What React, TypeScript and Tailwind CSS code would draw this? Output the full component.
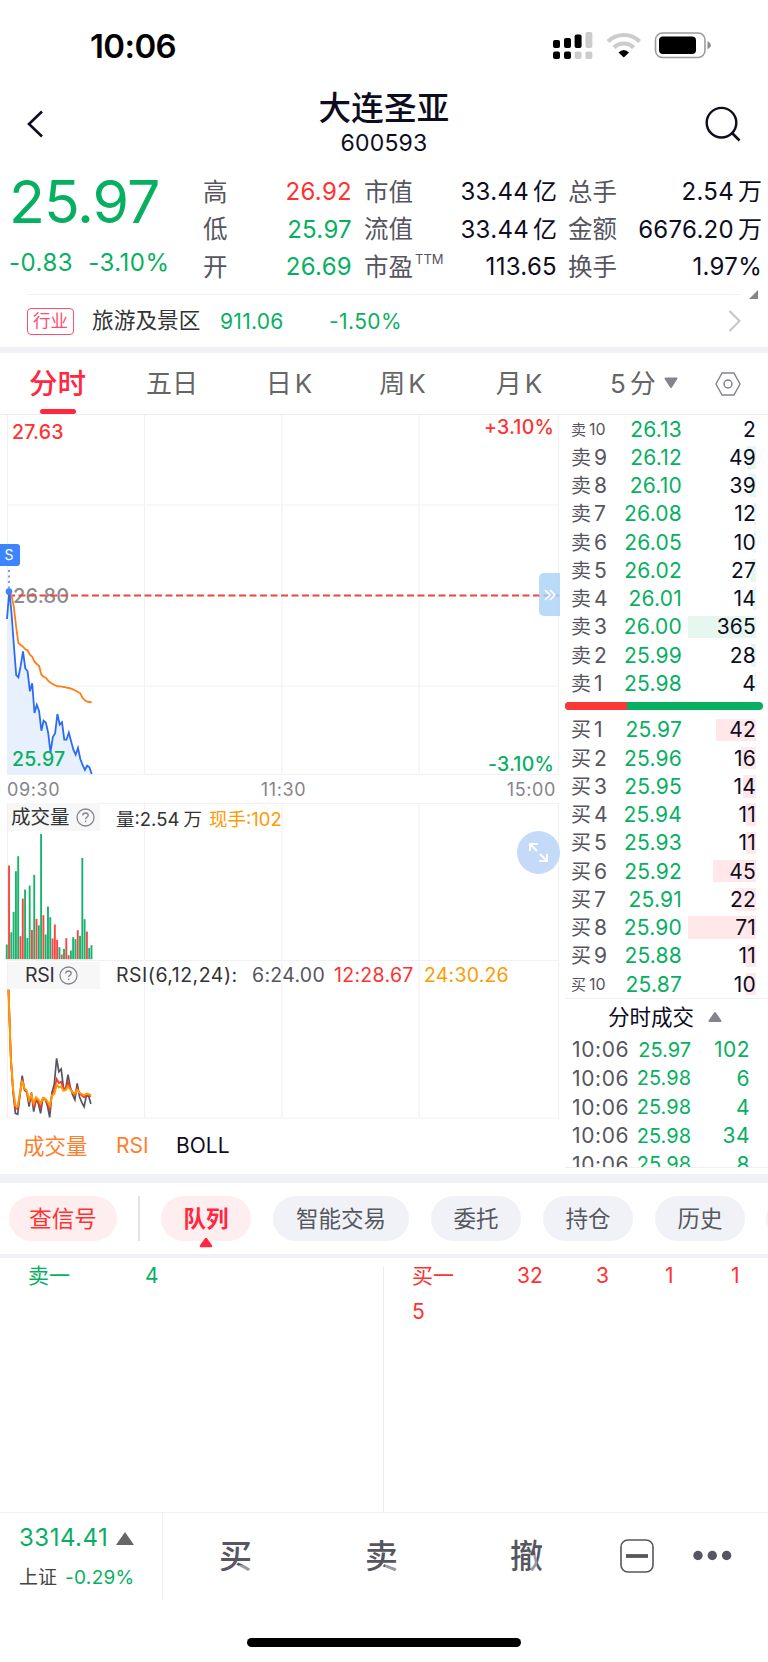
import { clsx } from "clsx";

type Level = { label: string; price: string; size: number; bar: number };

const asks: Level[] = [
  { label: "10", price: "26.13", size: 2, bar: 0 },
  { label: "9", price: "26.12", size: 49, bar: 9 },
  { label: "8", price: "26.10", size: 39, bar: 7 },
  { label: "7", price: "26.08", size: 12, bar: 2 },
  { label: "6", price: "26.05", size: 10, bar: 2 },
  { label: "5", price: "26.02", size: 27, bar: 5 },
  { label: "4", price: "26.01", size: 14, bar: 3 },
  { label: "3", price: "26.00", size: 365, bar: 68 },
  { label: "2", price: "25.99", size: 28, bar: 5 },
  { label: "1", price: "25.98", size: 4, bar: 1 },
];

const bids: Level[] = [
  { label: "1", price: "25.97", size: 42, bar: 40 },
  { label: "2", price: "25.96", size: 16, bar: 15 },
  { label: "3", price: "25.95", size: 14, bar: 13 },
  { label: "4", price: "25.94", size: 11, bar: 10 },
  { label: "5", price: "25.93", size: 11, bar: 10 },
  { label: "6", price: "25.92", size: 45, bar: 43 },
  { label: "7", price: "25.91", size: 22, bar: 21 },
  { label: "8", price: "25.90", size: 71, bar: 68 },
  { label: "9", price: "25.88", size: 11, bar: 10 },
  { label: "10", price: "25.87", size: 10, bar: 10 },
];

const trades = [
  { price: "25.97", size: "102" },
  { price: "25.98", size: "6" },
  { price: "25.98", size: "4" },
  { price: "25.98", size: "34" },
  { price: "25.98", size: "8" },
];

// one value per minute since 09:30, in thirds of a pixel from the chart top
const priceLine = [
  612, 527, 597, 692, 780, 787, 752, 709, 760, 769, 829, 805, 894, 869, 889, 947, 917, 923, 954,
  1012, 967, 955, 897, 929, 922, 974, 974, 953, 979, 1004, 1019, 999, 1032, 1050, 1065, 1052, 1057,
  1077,
];
const averageLine = [
  536, 536, 542, 577, 637, 684, 690, 695, 703, 706, 719, 725, 740, 747, 753, 779, 785, 789, 797,
  803, 807, 811, 814, 814, 815, 816, 818, 819, 821, 824, 827, 831, 835, 849, 856, 860, 861, 862,
];
const volumes = [
  44, -281, 81, 142, 264, 309, -69, -182, 209, 64, 221, -88, 253, -121, 102, 376, -132, 74, 158,
  126, -62, -104, -58, 36, -14, 31, -63, -12, 26, 66, 60, -87, 70, 304, 120, -83, 34, 42,
];
const rsi6 = [
  597, 800, 905, 968, 971, 915, 855, 898, 905, 948, 905, 963, 928, 938, 968, 922, 925, 945, 980,
  905, 880, 803, 843, 835, 892, 893, 852, 890, 912, 927, 878, 918, 935, 948, 915, 917, 940,
];
const rsi12 = [
  597, 800, 900, 953, 955, 910, 865, 895, 902, 935, 912, 950, 925, 932, 950, 922, 924, 938, 955,
  910, 900, 865, 877, 873, 896, 896, 875, 893, 905, 912, 893, 908, 915, 920, 912, 912, 918,
];
const rsi24 = [
  597, 800, 895, 945, 947, 908, 870, 893, 900, 928, 912, 938, 920, 926, 938, 922, 924, 932, 945,
  915, 910, 883, 890, 888, 900, 898, 887, 897, 905, 908, 898, 906, 910, 914, 909, 910, 914,
];

const STEP = 2.29;

function points(values: number[], x0: number, base = 0) {
  return values
    .map((v, i) => `${(x0 + i * STEP).toFixed(1)},${((v - base) / 3).toFixed(1)}`)
    .join(" ");
}

function StatusBar() {
  return (
    <div className="flex h-[92px] items-center pl-[90px]">
      <span className="w-[460px] text-[33px] leading-none font-semibold tracking-[-0.600px] text-black">
        10:06
      </span>
      <svg className="mr-[10px]" width="46" height="32" viewBox="550 30 46 32">
        <g fill="#000">
          <rect x="553" y="40" width="7" height="8" rx="2" />
          <rect x="564" y="38" width="7" height="10" rx="2" />
          <rect x="574.6" y="34.5" width="7" height="13.5" rx="2" />
          <rect x="553" y="51.6" width="7" height="7.4" rx="2" />
          <rect x="564" y="51.6" width="7" height="7.4" rx="2" />
        </g>
        <g fill="#ccc">
          <rect x="585.4" y="32" width="7" height="16" rx="2" />
          <rect x="574.6" y="51.6" width="7" height="7.4" rx="2" />
          <rect x="585.4" y="51.6" width="7" height="7.4" rx="2" />
        </g>
      </svg>
      <svg className="mr-[12px]" width="36" height="32" viewBox="605 30 36 32">
        <path d="M607 41.5 A22.5 22.5 0 0 1 638.6 41.5" stroke="#ccc" strokeWidth="4.2" fill="none" />
        <path d="M613 47.5 A14 14 0 0 1 632.6 47.5" stroke="#ccc" strokeWidth="4.2" fill="none" />
        <path d="M622.8 57.5 L617.5 52.5 Q622.8 47.5 628 52.5 Z" fill="#000" />
      </svg>
      <svg width="60" height="32" viewBox="653 30 60 32">
        <rect x="654.5" y="33" width="49.5" height="24.5" rx="7" stroke="#9b9b9b" strokeWidth="1.6" fill="none" />
        <rect x="658" y="36.5" width="37" height="17.5" rx="4" fill="#000" />
        <path d="M706.5 41 Q710 43 710 45.3 Q710 47.6 706.5 49.5 Z" fill="#8c8c8c" />
      </svg>
    </div>
  );
}

function Header() {
  return (
    <header className="flex h-[80px] justify-between text-[#0e0d1e]">
      <svg width="70" height="64" viewBox="0 92 70 64">
        <path d="M42 111.5 L29 124 L42 136.5" fill="none" stroke="currentColor" strokeWidth="2.6" />
      </svg>
      <div className="flex flex-col items-center">
        <h1 className="mt-[1px] h-[34px] text-[32.500px] leading-[32px] font-medium tracking-[0.300px]">大连圣亚</h1>
        <p className="text-[23px] leading-[32px] tracking-[0.200px]">600593</p>
      </div>
      <svg width="70" height="64" viewBox="698 92 70 64">
        <circle cx="721.5" cy="122.7" r="14.8" fill="none" stroke="currentColor" strokeWidth="2.4" />
        <path d="M732 133 L739.5 140.5" stroke="currentColor" strokeWidth="2.6" />
      </svg>
    </header>
  );
}

function Stat({ label, value, unit, sup, className }: {
  label: string;
  value: string;
  unit?: string;
  sup?: string;
  className?: string;
}) {
  return (
    <div className="flex h-[37.700px] items-center justify-between">
      <span className="flex text-[24.500px] text-[#565560]">
        {label}
        {sup && <sup className="top-[-8px] ml-[2px] text-[13px] leading-[24px]">{sup}</sup>}
      </span>
      <span className={clsx("flex text-[24px] tracking-[0.300px]", className ?? "text-[#0e0d1e]")}>
        {value}
        {unit && <span className="ml-[4px] tracking-normal">{unit}</span>}
      </span>
    </div>
  );
}

function Quote() {
  return (
    <section className="flex h-[122px] pt-px pl-[9px] leading-none">
      <div className="w-[194px] text-[#07b061]">
        <div className="h-[75px] pt-[1px] text-[59px] leading-[56px] tracking-[-1.100px]">25.97</div>
        <div className="flex gap-[15px] text-[24px] leading-[30px] tracking-[0.500px]">
          <span>-0.83</span>
          <span>-3.10%</span>
        </div>
      </div>
      <div className="mr-[12px] w-[149px]">
        <Stat label="高" value="26.92" className="text-[#ff3232]" />
        <Stat label="低" value="25.97" className="text-[#07b061]" />
        <Stat label="开" value="26.69" className="text-[#07b061]" />
      </div>
      <div className="mr-[11px] w-[193px]">
        <Stat label="市值" value="33.44" unit="亿" />
        <Stat label="流值" value="33.44" unit="亿" />
        <Stat label="市盈" sup="TTM" value="113.65" />
      </div>
      <div className="w-[194px]">
        <Stat label="总手" value="2.54" unit="万" />
        <Stat label="金额" value="6676.20" unit="万" />
        <Stat label="换手" value="1.97%" />
        <svg className="mt-[4px] ml-[181px] -mb-[4px]" width="9" height="9" viewBox="0 0 9 9">
          <path d="M9 0 V9 H0 Z" fill="#85848d" />
        </svg>
      </div>
    </section>
  );
}

function Industry() {
  return (
    <section className="mx-[27px] flex h-[53px] items-center border-t border-[#f0f0f2] text-[21px] leading-none">
      <span className="flex h-[27px] w-[47px] items-center justify-center rounded-[4px] border-[1.500px] border-[#ff4d6f] text-[17.500px] text-[#ff4d6f]">
        行业
      </span>
      <span className="ml-[18px] w-[128px] text-[21.700px] text-[#333]">旅游及景区</span>
      <span className="w-[109px] tracking-[0.300px] text-[#07b061]">911.06</span>
      <span className="tracking-[0.400px] text-[#07b061]">-1.50%</span>
      <svg className="ml-auto" width="13" height="22" viewBox="0 0 13 22">
        <path d="M1.5 1 L11.5 11 L1.5 21" fill="none" stroke="#c4c4c8" strokeWidth="2" />
      </svg>
    </section>
  );
}

function Tabs() {
  return (
    <nav className="flex h-[62px] border-b border-[#ededf0] text-[26px] leading-[62px] text-[#666]">
      <div className="flex w-[115px] flex-col items-center text-[28.500px] font-medium text-[#ff2741]">
        <span className="h-[56px]">分时</span>
        <span className="h-[6px] w-[36px] rounded-full bg-[#ff2741]" />
      </div>
      <span className="w-[114px] text-center">五日</span>
      <span className="flex w-[120px] justify-center gap-[3px]">日<span>K</span></span>
      <span className="flex w-[107px] justify-center gap-[3px]">周<span>K</span></span>
      <span className="flex w-[126px] justify-center gap-[3px]">月<span>K</span></span>
      <span className="ml-[28px] flex w-[54px] gap-[4px]">5<span>分</span></span>
      <svg className="mt-[24px]" width="14" height="12" viewBox="0 0 14 12">
        <path d="M1.5 1.5 H12.5 L7 10 Z" fill="#85848d" stroke="#85848d" strokeWidth="2" strokeLinejoin="round" />
      </svg>
      <svg className="mt-[18px] ml-[36px]" width="28" height="26" viewBox="0 0 28 26">
        <path d="M8 2 H20 L26 13 L20 24 H8 L2 13 Z" fill="none" stroke="#85848d" strokeWidth="1.5" strokeLinejoin="round" />
        <circle cx="14" cy="13" r="4" fill="none" stroke="#85848d" strokeWidth="1.5" />
      </svg>
    </nav>
  );
}

function Grid({ height, lines = [] }: { height: number; lines?: number[] }) {
  return (
    <g stroke="#f1f1f3" strokeWidth="1.2">
      {[7.5, 144.5, 282, 419, 558.5].map((x) => (
        <line key={x} x1={x} x2={x} y1="0" y2={height} />
      ))}
      {lines.map((y) => (
        <line key={y} x1="7" x2="559" y1={y} y2={y} />
      ))}
    </g>
  );
}

function PriceChart() {
  return (
    <div className="relative h-[361px] text-[19.500px] leading-none font-medium tracking-[0.200px]">
      <svg width="560" height="361" viewBox="0 0 560 361">
        <Grid height={360} lines={[90, 271, 359.5]} />
        <polygon points={`${points(priceLine, 7)} 92,360 7,360`} fill="#e8effd" />
        <text x="13" y="188" fontSize="20" fill="#8c8c8c">26.80</text>
        <line x1="8" x2="559" y1="180.5" y2="180.5" stroke="#ee4443" strokeWidth="2" strokeDasharray="7 3.5" />
        <polyline points={points(averageLine, 7)} fill="none" stroke="#ff7d1a" strokeWidth="1.8" />
        <polyline points={points(priceLine, 7)} fill="none" stroke="#2a6df5" strokeWidth="1.8" />
        <line x1="9" x2="9" y1="155" y2="174" stroke="#3d84ff" strokeWidth="1.5" strokeDasharray="2 3.5" />
        <circle cx="9" cy="176.5" r="3.3" fill="#3d84ff" />
      </svg>
      <span className="absolute top-[8px] left-[12px] text-[#ff3232]">27.63</span>
      <span className="absolute top-[3px] right-[6px] text-[#ff3232]">+3.10%</span>
      <span className="absolute top-[335px] left-[12px] text-[#07b061]">25.97</span>
      <span className="absolute top-[340px] right-[6px] text-[#07b061]">-3.10%</span>
      <span className="absolute top-[129px] left-0 flex h-[22px] w-[20px] items-center justify-center rounded-r-[3px] bg-[#3d84ff] pr-[2px] text-[14px] font-normal text-white">
        S
      </span>
      <span className="absolute top-[158px] right-0 flex h-[43px] w-[21px] items-center rounded-l-[5px] bg-[#a9d2f6]/80">
        <svg className="ml-[5px]" width="13" height="14" viewBox="0 0 13 14">
          <path d="M1 2 L6 7 L1 12 M6 2 L11 7 L6 12" fill="none" stroke="#fff" strokeWidth="1.5" />
        </svg>
      </span>
    </div>
  );
}

function Help() {
  return (
    <svg width="19" height="19" viewBox="0 0 19 19" fill="none" stroke="#85848d" strokeWidth="1.3">
      <circle cx="9.5" cy="9.5" r="8.5" />
      <path d="M6.8 7.5 Q6.8 5 9.5 5 Q12.2 5 12.2 7.3 Q12.2 8.6 10.8 9.3 Q9.6 9.9 9.6 11.2" />
      <path d="M9.6 12.6 V14.2" />
    </svg>
  );
}

function VolumeChart() {
  return (
    <div className="relative h-[159px] text-[19px] leading-[28px]">
      <svg width="560" height="159" viewBox="0 0 560 159">
        <Grid height={157} lines={[0.5, 157.5]} />
        {volumes.map((v, i) => (
          <rect
            key={i}
            x={5.8 + i * STEP}
            y={156.2 - Math.abs(v) / 3}
            width="1.9"
            height={Math.abs(v) / 3}
            fill={v < 0 ? "#fb4545" : "#19b36d"}
          />
        ))}
      </svg>
      <div className="absolute top-0 left-0 flex whitespace-nowrap text-[#333]">
        <span className="ml-[8px] flex h-[28px] w-[92px] items-center gap-[6px] bg-[#f7f7f8] pl-[3px] text-[19.500px]">
          成交量
          <Help />
        </span>
        <span className="ml-[16px] flex w-[93px] pt-[2px] text-[18.500px]">
          量:2.54<span className="ml-[4px]">万</span>
        </span>
        <span className="pt-[2px] text-[18.500px] text-[#ff9a00]">现手:102</span>
      </div>
      <span className="absolute top-[28px] right-0 flex h-[43px] w-[43px] items-center justify-center rounded-full bg-[#c5daf8]">
        <svg width="21" height="21" viewBox="0 0 21 21" fill="none" stroke="#fff" strokeWidth="2">
          <path d="M2 9 V2 H10 M2 2 L9 9" />
          <path d="M19 12 V19 H11 M19 19 L12 12" />
        </svg>
      </span>
    </div>
  );
}

function RsiChart() {
  return (
    <div className="relative h-[158px] text-[19.500px] leading-[27px]">
      <svg width="560" height="158" viewBox="0 0 560 158">
        <Grid height={156} lines={[156]} />
        <g fill="none" strokeWidth="1.7">
          <polyline points={points(rsi6, 8.5, 514)} stroke="#565560" />
          <polyline points={points(rsi12, 8.5, 514)} stroke="#ff3232" />
          <polyline points={points(rsi24, 8.5, 514)} stroke="#ff9a00" strokeWidth="2" />
        </g>
      </svg>
      <div className="absolute top-0 left-[8px] flex whitespace-nowrap text-[#333]">
        <span className="mr-[16px] flex w-[92px] items-center gap-[5px] bg-[#f7f7f8] pl-[17px] tracking-[-0.300px]">
          RSI
          <Help />
        </span>
        <span className="w-[136px] tracking-[0.500px]">RSI(6,12,24):</span>
        <span className="w-[82px] tracking-[0.300px] text-[#565560]">6:24.00</span>
        <span className="w-[90px] tracking-[0.300px] text-[#ff3232]">12:28.67</span>
        <span className="tracking-[0.200px] text-[#ff9a00]">24:30.26</span>
      </div>
    </div>
  );
}

function BookRow({ side, level }: { side: "卖" | "买"; level: Level }) {
  const small = level.label === "10";
  return (
    <div className="flex h-[28.270px] items-center pr-[12px] pl-[11px] text-[21px] leading-none">
      <span
        className={clsx(
          "flex w-[41px] items-baseline text-[#565560]",
          small ? "gap-[3px] text-[16px]" : "gap-[3px] text-[21px]",
        )}
      >
        <span className={small ? "text-[15px]" : "text-[20px]"}>{side}</span>
        {level.label}
      </span>
      <span className="w-[70px] text-right tracking-[0.200px] text-[#07b061]">{level.price}</span>
      <span className="relative flex h-[22.500px] flex-1 items-center justify-end text-[#0e0d1e]">
        <span
          className={clsx("absolute right-0 h-full", side === "卖" ? "bg-[#e6f7ef]" : "bg-[#ffe7ea]")}
          style={{ width: level.bar }}
        />
        <span className="relative tracking-[0.200px]">{level.size}</span>
      </span>
    </div>
  );
}

function OrderBook() {
  return (
    <aside className="flex w-[208px] flex-col">
      {asks.map((l) => (
        <BookRow key={l.label} side="卖" level={l} />
      ))}
      <div className="mt-[4px] mb-[6px] ml-[5px] flex h-[8px] w-[198px] shrink-0 overflow-hidden rounded-full bg-[#07b061]">
        <span className="w-[62px] bg-[#fb3838]" />
      </div>
      {bids.map((l) => (
        <BookRow key={l.label} side="买" level={l} />
      ))}
      <div className="ml-[5px] flex h-[37px] shrink-0 items-center border-t border-[#f0f0f2] pl-[43px] text-[21.500px] text-[#0e0d1e]">
        分时成交
        <svg className="ml-[14px]" width="14" height="12" viewBox="0 0 14 12">
          <path d="M1.5 10 H12.5 L7 2 Z" fill="#85848d" stroke="#85848d" strokeWidth="2" strokeLinejoin="round" />
        </svg>
      </div>
      <div className="ml-[5px] h-[133px] shrink-0 overflow-hidden border-b border-[#f0f0f2] pr-[18px] pl-[7px]">
        {trades.map((t, i) => (
          <div key={i} className="flex h-[28.700px] items-center leading-none">
            <span className="w-[61px] text-[21px] tracking-[0.600px] text-[#565560]">10:06</span>
            <span className="w-[58px] text-right text-[20px] text-[#07b061]">{t.price}</span>
            <span className="flex-1 text-right text-[21px] tracking-[0.500px] text-[#07b061]">{t.size}</span>
          </div>
        ))}
      </div>
    </aside>
  );
}

function Market() {
  return (
    <section className="flex h-[759px]">
      <div className="w-[560px]">
        <PriceChart />
        <div className="flex h-[27px] items-center justify-between pr-[4px] pl-[7px] text-[18px] leading-none tracking-[0.600px] text-[#85848d]">
          <span>09:30</span>
          <span>11:30</span>
          <span>15:00</span>
        </div>
        <VolumeChart />
        <RsiChart />
        <div className="flex h-[52px] items-center pl-[23px] text-[21px] text-[#ff7f2e]">
          <span className="w-[93px] text-[21.500px]">成交量</span>
          <span className="w-[60px]">RSI</span>
          <span className="text-[#0e0d1e]">BOLL</span>
        </div>
      </div>
      <OrderBook />
    </section>
  );
}

function Pills() {
  return (
    <nav className="flex h-[71px] overflow-hidden pt-[13px] pl-[9px] text-[22.500px] leading-[45px] whitespace-nowrap text-[#565860]">
      <span className="h-[45px] w-[108px] shrink-0 rounded-full bg-[#ffeeef] text-center text-[#ff3232]">查信号</span>
      <span className="mr-[21px] ml-[21px] h-[45px] w-[2px] shrink-0 bg-[#e3e3e6]" />
      <span className="flex w-[90px] shrink-0 flex-col items-center">
        <span className="h-[45px] w-full rounded-full bg-[#ffeeef] text-center font-bold text-[#ff2741]">队列</span>
        <svg className="relative -top-[4px]" width="14" height="11" viewBox="0 0 14 11">
          <path d="M2 9 H12 L7 2 Z" fill="#ff2741" stroke="#ff2741" strokeWidth="2.5" strokeLinejoin="round" />
        </svg>
      </span>
      <span className="ml-[22px] h-[45px] w-[136px] shrink-0 rounded-full bg-[#f1f2f7] text-center">智能交易</span>
      {["委托", "持仓", "历史"].map((name) => (
        <span key={name} className="ml-[22px] h-[45px] w-[90px] shrink-0 rounded-full bg-[#f1f2f7] text-center">
          {name}
        </span>
      ))}
      <span className="ml-[21px] h-[45px] w-[90px] shrink-0 rounded-full bg-[#f1f2f7]" />
    </nav>
  );
}

function Queue() {
  return (
    <section className="flex h-[254px] text-[21px] leading-[36px]">
      <div className="flex w-[383px] pl-[28px] text-[#07b061]">
        <span className="w-[117px]">卖一</span>
        <span>4</span>
      </div>
      <div className="mt-[8px] w-[1px] bg-[#ededf0]" />
      <div className="pl-[28px] text-[#ff3232]">
        <div className="flex">
          <span className="w-[105px]">买一</span>
          <span className="w-[79px]">32</span>
          <span className="w-[69px]">3</span>
          <span className="w-[66px]">1</span>
          <span>1</span>
        </div>
        <div>5</div>
      </div>
    </section>
  );
}

function Action({ children, fade }: { children: string; fade: string }) {
  return (
    <span className="relative w-[33px] text-[33px] leading-[33px] font-medium text-[#565560]">
      {children}
      <span className={clsx("absolute bg-white/40", fade)} />
    </span>
  );
}

function BottomBar() {
  return (
    <footer className="flex h-[150px] flex-col border-t border-[#f0f0f2]">
      <div className="flex h-[87px]">
        <div className="w-[163px] border-r border-[#f0f0f2] pt-[9px] pl-[19px]">
          <div className="flex h-[32px] items-center gap-[8px] text-[24px] tracking-[0.500px] text-[#07b061]">
            3314.41
            <svg width="18" height="13" viewBox="0 0 18 13">
              <path d="M9 0 L18 13 H0 Z" fill="#666" />
            </svg>
          </div>
          <div className="mt-[8px] flex h-[32px] items-center gap-[8px] text-[19px] tracking-[0.300px] text-[#07b061]">
            <span className="tracking-normal text-[#444]">上证</span>
            <span>-0.29%</span>
          </div>
        </div>
        <div className="flex h-[86px] items-center pl-[56px]">
          <Action fade="right-0 bottom-[1px] h-[7px] w-[13px]">买</Action>
          <span className="w-[113px]" />
          <Action fade="right-0 bottom-[1px] h-[7px] w-[13px]">卖</Action>
          <span className="w-[112px]" />
          <Action fade="right-[6px] bottom-[1px] h-[17px] w-[6px]">撤</Action>
          <svg className="ml-[77px]" width="34" height="34" viewBox="0 0 34 34" fill="none" stroke="#565560">
            <rect x="1" y="1" width="32" height="32" rx="7" strokeWidth="1.6" />
            <path d="M6 17 H28" strokeWidth="3.8" />
          </svg>
          <svg className="ml-[38px]" width="42" height="12" viewBox="0 0 42 12" fill="#565560">
            <circle cx="6" cy="5.5" r="4.7" />
            <circle cx="20.3" cy="5.5" r="4.7" />
            <circle cx="34.6" cy="5.5" r="4.7" />
          </svg>
        </div>
      </div>
      <div className="mt-[38px] ml-[247px] h-[9px] w-[274px] rounded-full bg-black" />
    </footer>
  );
}

export default function App() {
  return (
    <div className="flex h-[1662px] w-[768px] flex-col overflow-hidden bg-white font-['Inter','Noto_Sans_CJK_SC',sans-serif]">
      <StatusBar />
      <Header />
      <Quote />
      <Industry />
      <div className="h-[6px] bg-[#f0f1f6]" />
      <Tabs />
      <Market />
      <div className="h-[9px] bg-[#f0f1f6]" />
      <Pills />
      <div className="h-[4px] bg-[#f0f1f6]" />
      <Queue />
      <BottomBar />
    </div>
  );
}
